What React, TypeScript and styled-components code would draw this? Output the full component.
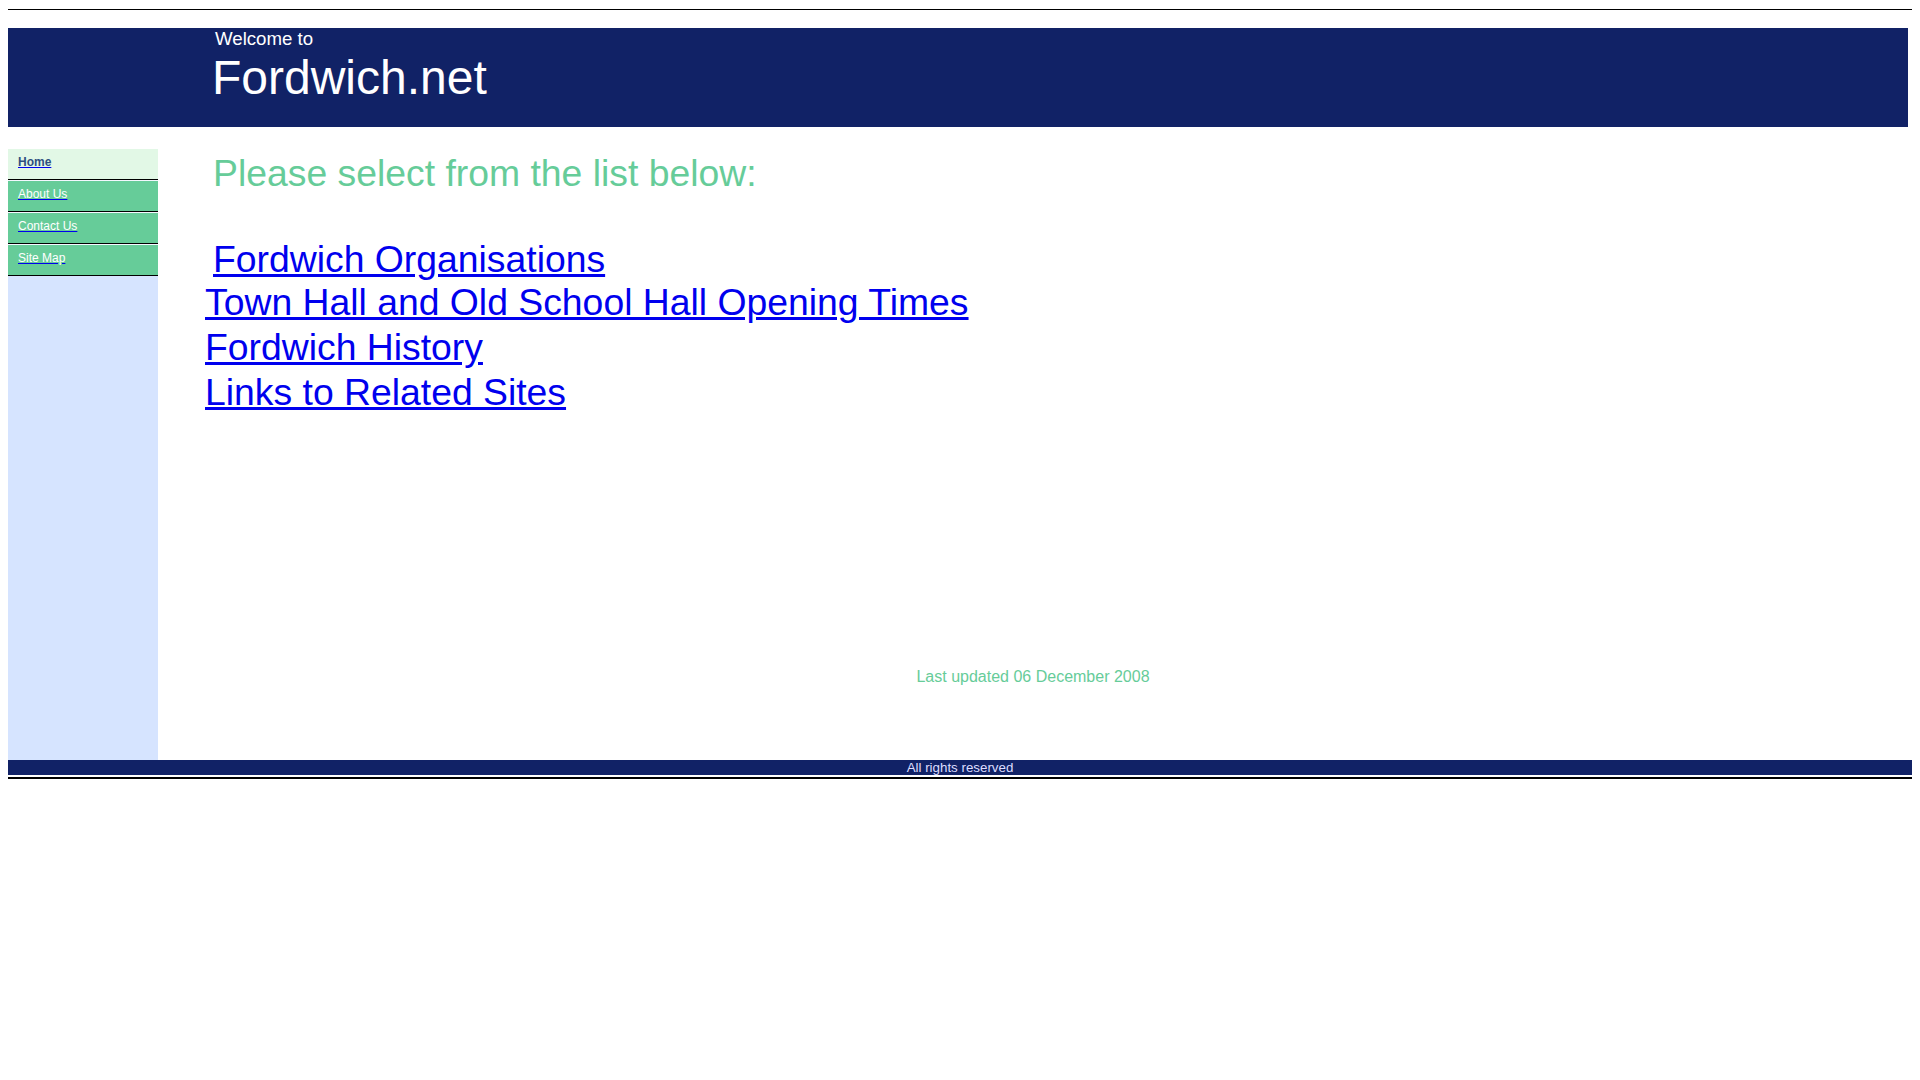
import React from 'react';
import styled, { createGlobalStyle } from 'styled-components';

const navy = '#112266';
const mint = '#66cc99';

const GlobalStyle = createGlobalStyle`
  body {
    margin: 8px;
    background: #ffffff;
    font-family: "Liberation Sans", Arial, sans-serif;
  }
`;

const Rule = styled.div<{ thick?: boolean }>`
  height: ${p => (p.thick ? 2 : 1)}px;
  background: #000;
  margin-top: ${p => (p.thick ? 2 : 1)}px;
`;

const Header = styled.div`
  height: 99px;
  margin: 18px 4px 0 0;
  background: ${navy};
  padding-left: 204px;
  color: #ffffff;
`;

const Welcome = styled.div`
  font-size: 18.67px;
  line-height: 22px;
  margin-left: 3px;
`;

const SiteTitle = styled.div`
  font-size: 48px;
  line-height: 56px;
`;

const BodyRow = styled.div`
  display: flex;
  height: 611px;
  margin: 22px 4px 0 0;
`;

const Sidebar = styled.div`
  width: 150px;
  display: flex;
  flex-direction: column;
  background: #d6e4ff;
`;

const NavItem = styled.div<{ current?: boolean }>`
  height: 30px;
  box-sizing: content-box;
  background: ${p => (p.current ? '#e2f8e6' : mint)};
  border-top: ${p => (p.current ? 'none' : '1px solid #f4f8ff')};
  border-bottom: 1px solid #000;
`;

const NavLink = styled.a<{ current?: boolean }>`
  display: inline-block;
  margin: 6px 0 0 10px;
  font-size: 12px;
  line-height: 14px;
  font-weight: ${p => (p.current ? 'bold' : 'normal')};
  color: ${p => (p.current ? '#2f4f80' : '#ffffff')};
  text-decoration: underline;
  text-decoration-color: #0000ee;
  cursor: pointer;
`;

const Main = styled.div`
  flex: 1;
  display: flex;
  flex-direction: column;
`;

const Intro = styled.div`
  padding: 3px 0 0 47px;
`;

const Prompt = styled.div`
  margin-left: 8px;
  font-size: 37.33px;
  line-height: 43px;
  color: ${mint};
  margin-bottom: 43px;
`;

const LinkList = styled.div`
  display: flex;
  flex-direction: column;
  align-items: flex-start;
`;

const BigLink = styled.a<{ first?: boolean }>`
  display: block;
  font-size: 37.33px;
  line-height: ${p => (p.first ? 42 : 45)}px;
  margin-left: ${p => (p.first ? 8 : 0)}px;
  color: #0000ee;
  text-decoration: underline;
  cursor: pointer;
`;

const Updated = styled.div`
  margin-top: 253px;
  text-align: center;
  font-size: 16px;
  color: ${mint};
`;

const Footer = styled.div`
  height: 15px;
  background: ${navy};
  color: #ddddff;
  font-size: 13.33px;
  line-height: 16px;
  text-align: center;
`;

const navItems = ['Home', 'About Us', 'Contact Us', 'Site Map'];

const sections = [
  'Fordwich Organisations',
  'Town Hall and Old School Hall Opening Times',
  'Fordwich History',
  'Links to Related Sites',
];

export default function App() {
  return (
    <>
      <GlobalStyle />
      <Rule />
      <Header>
        <Welcome>Welcome to</Welcome>
        <SiteTitle>Fordwich.net</SiteTitle>
      </Header>
      <BodyRow>
        <Sidebar>
          {navItems.map((item, i) => (
            <NavItem key={item} current={i === 0}>
              <NavLink current={i === 0}>{item}</NavLink>
            </NavItem>
          ))}
        </Sidebar>
        <Main>
          <Intro>
            <Prompt>Please select from the list below:</Prompt>
            <LinkList>
              {sections.map((s, i) => (
                <BigLink key={s} first={i === 0}>
                  {s}
                </BigLink>
              ))}
            </LinkList>
          </Intro>
          <Updated>Last updated 06 December 2008</Updated>
        </Main>
      </BodyRow>
      <Footer>All rights reserved</Footer>
      <Rule thick />
    </>
  );
}
